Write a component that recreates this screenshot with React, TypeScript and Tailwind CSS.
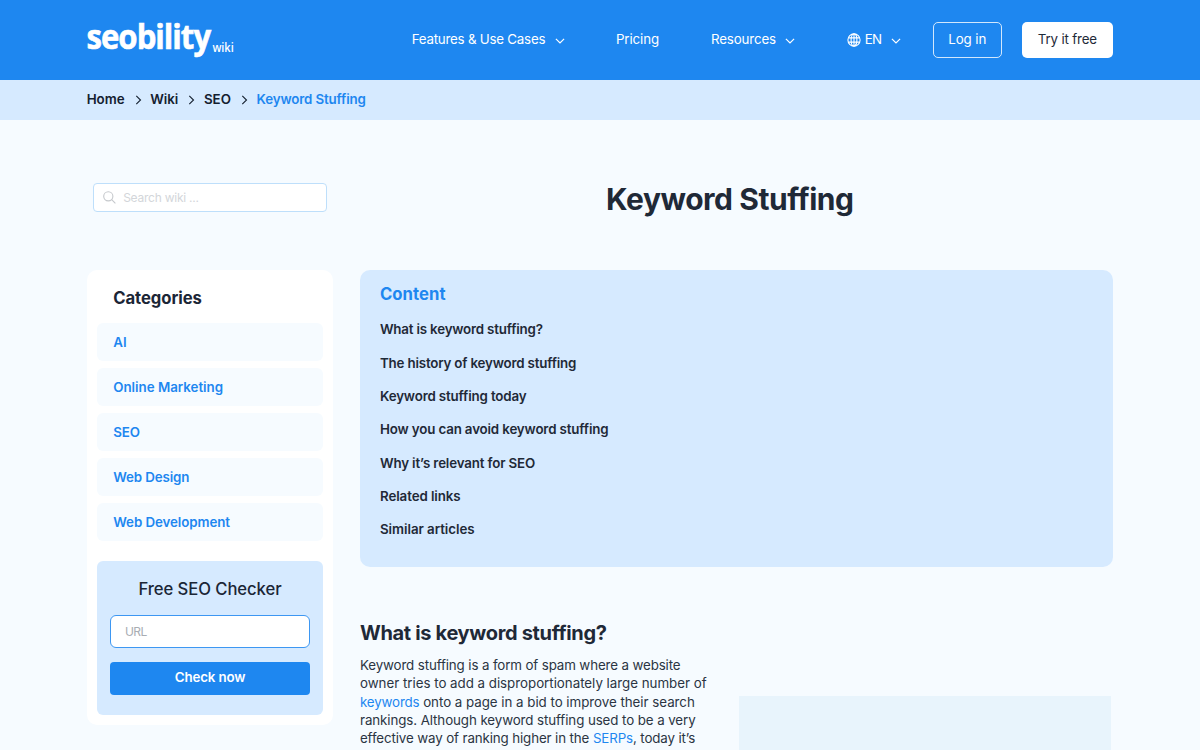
import type { ReactNode } from "react";

const font = "font-['Inter','Liberation_Sans',sans-serif]";

function Chevron({ className = "" }: { className?: string }) {
  return (
    <svg className={className} width="10" height="6" viewBox="0 0 10 6" fill="none" stroke="currentColor" strokeWidth="1.2">
      <path d="M0.9 0.8 5 4.9 9.1 0.8" />
    </svg>
  );
}

function Globe() {
  return (
    <svg className="mt-px" width="14" height="14" viewBox="0 0 14 14" fill="none" stroke="currentColor" strokeWidth="1.1">
      <circle cx="7" cy="7" r="6.1" />
      <ellipse cx="7" cy="7" rx="2.9" ry="6.1" />
      <path d="M1.4 4.9h11.2M1.4 9.1h11.2M7 .9v12.2" />
    </svg>
  );
}

function SearchIcon() {
  return (
    <svg width="13" height="13" viewBox="0 0 13 13" fill="none" stroke="currentColor" strokeWidth="1.1">
      <circle cx="5.3" cy="5.3" r="4.6" />
      <path d="m8.7 8.7 3.7 3.7" />
    </svg>
  );
}

function Crumb({ children }: { children: ReactNode }) {
  return (
    <>
      <a>{children}</a>
      <svg className="ml-[10px] mr-[8.6px] mt-[2px]" width="7" height="10" viewBox="0 0 7 10" fill="none" stroke="currentColor" strokeWidth="1.1">
        <path d="M1.3 0.9 5.5 5 1.3 9.1" />
      </svg>
    </>
  );
}

const categories = [
  { name: "AI", spacing: "" },
  { name: "Online Marketing", spacing: "tracking-[-0.02px]" },
  { name: "SEO", spacing: "tracking-[-0.1px]" },
  { name: "Web Design", spacing: "tracking-[-0.13px]" },
  { name: "Web Development", spacing: "tracking-[-0.08px]" },
];

const contents = [
  { name: "What is keyword stuffing?", spacing: "tracking-[-0.19px]" },
  { name: "The history of keyword stuffing", spacing: "tracking-[-0.18px]" },
  { name: "Keyword stuffing today", spacing: "tracking-[-0.15px]" },
  { name: "How you can avoid keyword stuffing", spacing: "tracking-[-0.15px]" },
  { name: "Why it’s relevant for SEO", spacing: "tracking-[-0.15px]" },
  { name: "Related links", spacing: "tracking-[-0.09px]" },
  { name: "Similar articles", spacing: "tracking-[-0.04px]" },
];

function Header() {
  return (
    <header className="h-20 bg-[#1e87f0] text-white">
      <div className="ml-[86.67px] flex h-full w-[1026.67px] items-center">
        <svg className="mr-[173px] shrink-0" width="152" height="80" viewBox="0 0 152 80" fill="currentColor">
          <text x="-0.5" y="49.2" textLength="123.6" lengthAdjust="spacingAndGlyphs" stroke="currentColor" strokeWidth="0.6" className="font-['Open_Sans',sans-serif] text-[34.5px] font-bold tracking-[-1.1px]">seobility</text>
          <text x="125.4" y="52" textLength="21.3" lengthAdjust="spacingAndGlyphs" className="font-['Open_Sans',sans-serif] text-[12.5px] font-semibold">wiki</text>
        </svg>
        <nav className="flex shrink-0 items-center whitespace-nowrap text-[13.33px] leading-5">
          <a className="flex w-[204.3px] items-center pb-0.5 tracking-[-0.23px]">
            Features &amp; Use Cases
            <Chevron className="ml-[9.5px] mt-[3px]" />
          </a>
          <a className="w-[95px] pb-0.5 tracking-[-0.12px]">Pricing</a>
          <a className="flex w-[135.7px] items-center pb-0.5 tracking-[-0.14px]">
            Resources
            <Chevron className="ml-[9px] mt-[3px]" />
          </a>
          <a className="flex w-[86.3px] items-center pb-0.5">
            <Globe />
            <span className="ml-1 tracking-[-0.6px]">EN</span>
            <Chevron className="ml-[9.3px] mt-[3px]" />
          </a>
          <a className="flex h-[36.6px] w-[68.6px] items-center justify-center rounded-[5px] border border-white/80 pb-0.5 tracking-[-0.09px]">Log in</a>
          <a className="ml-5 flex h-[36.6px] w-[91.6px] items-center justify-center rounded-[5px] bg-white pb-0.5 tracking-[-0.17px] text-[#1f2a38]">Try it free</a>
        </nav>
      </div>
    </header>
  );
}

function Sidebar() {
  return (
    <aside className="h-[455px] w-[246.67px] shrink-0 rounded-[10px] bg-white px-[10px] pt-4 text-[#1b2636]">
      <h3 className="ml-[16.6px] h-[37px] text-[16.67px] font-[650] leading-[24px] tracking-[-0.07px]">Categories</h3>
      <ul className="flex flex-col gap-[6.67px]">
        {categories.map((c) => (
          <li key={c.name} className={`h-[38.33px] rounded-[6px] bg-[#f6fbff] pl-[16.6px] text-[13.33px] font-[570] leading-[38px] text-[#1e87f0] ${c.spacing}`}>
            {c.name}
          </li>
        ))}
      </ul>
      <form className="mt-5 h-[153.3px] rounded-[6px] bg-[#d6eaff] px-[13.33px] pt-4">
        <h3 className="text-center text-[16.67px] font-medium leading-6 tracking-[-0.08px]">Free SEO Checker</h3>
        <div className="mt-[13.3px] h-[33.4px] rounded-[6px] border border-[#3d97f2] bg-white pl-[14px] text-[12px] leading-[31px] tracking-[-0.6px] text-[#a9adb3]">URL</div>
        <button type="button" className="mt-[13.6px] block h-[33.4px] w-full rounded-[4px] bg-[#1e87f0] text-[13.33px] font-semibold tracking-[-0.15px] text-white">Check now</button>
      </form>
    </aside>
  );
}

export default function App() {
  return (
    <div className={`h-[750px] w-[1200px] overflow-hidden bg-[#f6fbff] ${font}`}>
      <Header />
      <div className="flex h-10 items-center bg-[#d6eaff] pb-0.5 pl-[86.67px] text-[13.33px] font-[560] leading-5 text-[#14202f]">
        <Crumb>Home</Crumb>
        <Crumb>Wiki</Crumb>
        <Crumb>SEO</Crumb>
        <span className="tracking-[-0.14px] text-[#1e87f0]">Keyword Stuffing</span>
      </div>

      <div className="flex h-[150px] pl-[93.33px] pt-[63px]">
        <div className="flex h-[28.6px] w-[233.5px] items-center rounded-[4px] border border-[#bedffb] bg-white pl-[8.5px] text-[12px] tracking-[-0.24px] text-[#d3d6da]">
          <span className="mt-px text-[#c5c8cc]"><SearchIcon /></span>
          <span className="ml-[7.3px] mt-px">Search wiki ...</span>
        </div>
        <h1 className="ml-[33px] h-[34px] w-[740px] text-center text-[30px] font-[680] leading-[32px] tracking-[-0.45px] text-[#1f2937]">Keyword Stuffing</h1>
      </div>

      <div className="flex gap-[26.66px] pl-[86.67px]">
        <Sidebar />
        <main className="w-[753.33px] shrink-0 text-[#1f2937]">
          <section className="h-[296.7px] rounded-[10px] bg-[#d6eaff] px-5 pt-3">
            <h2 className="text-[16.67px] font-[650] leading-6 tracking-[0.05px] text-[#1e87f0]">Content</h2>
            <ul className="mt-[7.2px] text-[13.33px] font-[560] leading-[33.33px]">
              {contents.map((c) => (
                <li key={c.name} className={c.spacing}>{c.name}</li>
              ))}
            </ul>
          </section>
          <section className="flex">
            <div className="w-[379px] shrink-0 whitespace-nowrap">
              <h2 className="mt-[52px] text-[20px] font-[650] leading-7 tracking-[-0.33px]">What is keyword stuffing?</h2>
              <p className="mt-[9.3px] text-[13.33px] leading-[18.33px] text-[#2b3543]">
                <span className="block tracking-[-0.125px]">Keyword stuffing is a form of spam where a website</span>
                <span className="block tracking-[-0.02px]">owner tries to add a disproportionately large number of</span>
                <span className="block tracking-[-0.03px]"><a className="tracking-[-0.15px] text-[#1e87f0]">keywords</a> onto a page in a bid to improve their search</span>
                <span className="block tracking-[-0.09px]">rankings. Although keyword stuffing used to be a very</span>
                <span className="block tracking-[-0.12px]">effective way of ranking higher in the <a className="text-[#1e87f0]">SERPs</a>, today it’s</span>
              </p>
            </div>
            <div className="mt-[129.3px] h-[200px] w-[372px] bg-[#e8f4fc]" />
          </section>
        </main>
      </div>
    </div>
  );
}
